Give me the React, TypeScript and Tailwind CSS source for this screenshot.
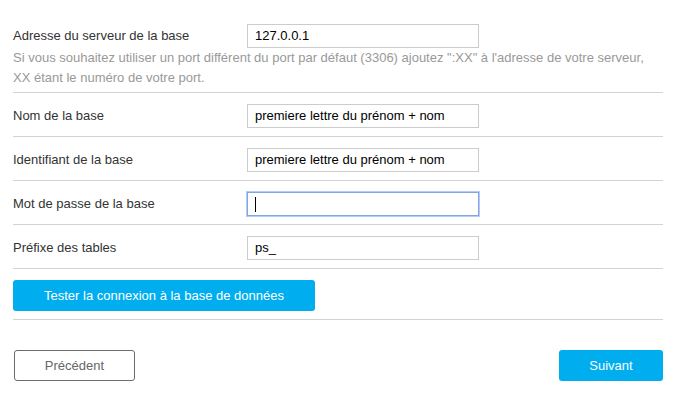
import React from "react";

const font = { fontFamily: '"Liberation Sans", Arial, sans-serif' };

function Field({ label, value, focused }: { label: string; value?: string; focused?: boolean }) {
  return (
    <div className="flex items-center">
      <div className="w-[234px] text-[13px] text-[#333]">{label}</div>
      {focused ? (
        <div className="w-[232px] h-[24px] border border-[#7ea6ea] shadow-[0_0_0_1px_#b5cdf3] flex items-center pl-[7px]">
          <span className="w-px h-[15px] bg-black" />
        </div>
      ) : (
        <div className="w-[232px] h-[24px] border border-[#cccccc] flex items-center pl-[7px] text-[13px] text-black">
          {value}
        </div>
      )}
    </div>
  );
}

export default function App() {
  return (
    <div className="w-[684px] h-[402px] bg-white" style={font}>
      <div className="ml-[13px] w-[650px] pt-[13px]">
        <div className="pt-[11px] pb-[4px] border-b border-[#d3d3d3]">
          <Field label="Adresse du serveur de la base" value="127.0.0.1" />
          <p className="text-[13px] leading-[20px] text-[#999999]">
            Si vous souhaitez utiliser un port différent du port par défaut (3306) ajoutez ":XX" à l'adresse de votre serveur,
            <br />
            XX étant le numéro de votre port.
          </p>
        </div>
        <div className="pt-[11px] pb-[8px] border-b border-[#d3d3d3]">
          <Field label="Nom de la base" value="premiere lettre du prénom + nom" />
        </div>
        <div className="pt-[11px] pb-[8px] border-b border-[#d3d3d3]">
          <Field label="Identifiant de la base" value="premiere lettre du prénom + nom" />
        </div>
        <div className="pt-[11px] pb-[8px] border-b border-[#d3d3d3]">
          <Field label="Mot de passe de la base" focused />
        </div>
        <div className="pt-[11px] pb-[8px] border-b border-[#d3d3d3]">
          <Field label="Préfixe des tables" value="ps_" />
        </div>
        <div className="pt-[11px] pb-[8px] border-b border-[#d3d3d3]">
          <button className="w-[302px] h-[31px] rounded-[3px] bg-[#00aeef] text-white text-[13px] flex items-center justify-center">
            Tester la connexion à la base de données
          </button>
        </div>
        <div className="flex justify-between items-center mt-[30px]">
          <button className="ml-px w-[121px] h-[31px] rounded-[3px] border border-[#6c6c6c] text-[#666] text-[13px] flex items-center justify-center">
            Précédent
          </button>
          <button className="w-[104px] h-[31px] rounded-[3px] bg-[#00aeef] text-white text-[13px] flex items-center justify-center">
            Suivant
          </button>
        </div>
      </div>
    </div>
  );
}
